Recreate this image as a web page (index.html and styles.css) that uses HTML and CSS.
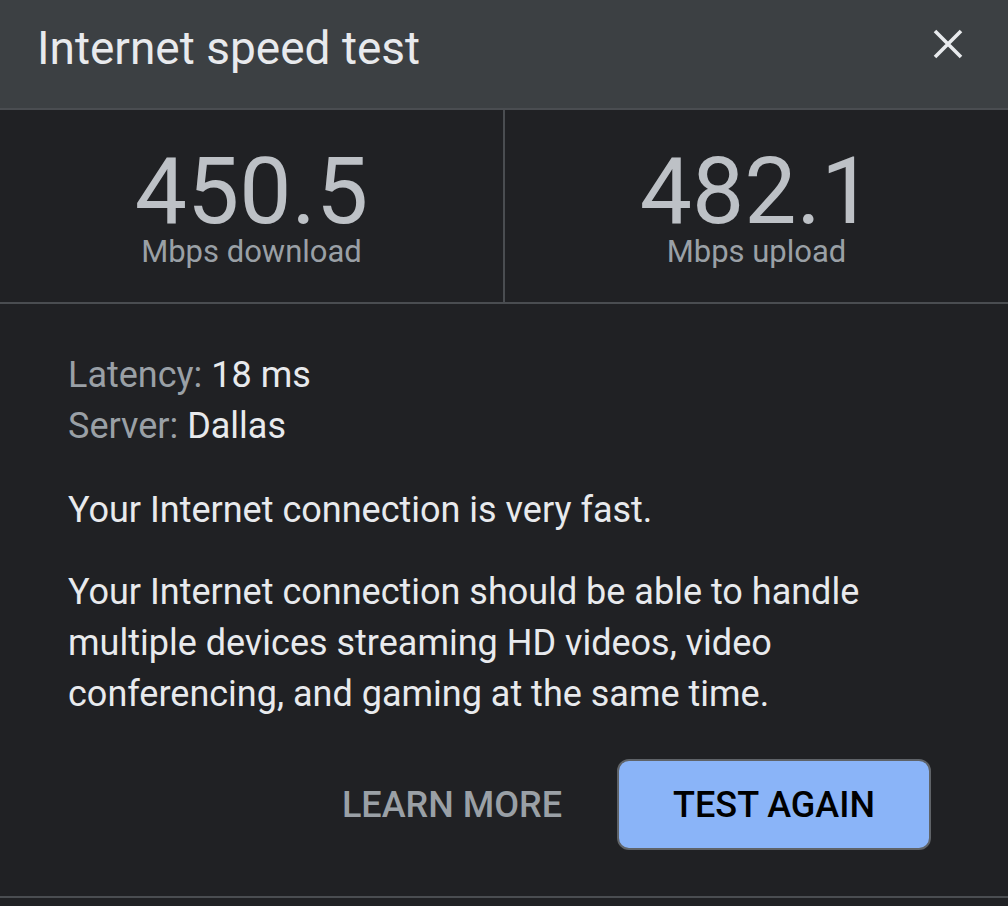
FILE: index.html
```html
<!DOCTYPE html>
<html>
<head>
<meta charset="utf-8">
<link rel="stylesheet" href="styles.css">
</head>
<body>
<div class="dialog">
  <header class="header">
    <h1 class="title">Internet speed test</h1>
    <button class="close" aria-label="Close">
      <svg width="32" height="32" viewBox="0 0 32 32"><path d="M3 3 L29 29 M29 3 L3 29" stroke="#e8eaed" stroke-width="3.6" stroke-linecap="butt" fill="none"/></svg>
    </button>
  </header>
  <section class="stats">
    <div class="stat">
      <div class="value">450.5</div>
      <div class="unit">Mbps download</div>
    </div>
    <div class="stat">
      <div class="value">482.1</div>
      <div class="unit">Mbps upload</div>
    </div>
  </section>
  <section class="body">
    <div class="meta">
      <div><span class="label">Latency:</span> 18 ms</div>
      <div><span class="label">Server:</span> Dallas</div>
    </div>
    <p class="verdict">Your Internet connection is very fast.</p>
    <p class="desc">Your Internet connection should be able to handle multiple devices streaming HD videos, video conferencing, and gaming at the same time.</p>
    <div class="actions">
      <button class="btn text">LEARN MORE</button>
      <button class="btn primary">TEST AGAIN</button>
    </div>
  </section>
  <div class="footer-line"></div>
</div>
</body>
</html>
```
FILE: styles.css
```css
* { box-sizing: border-box; }
html, body { margin: 0; padding: 0; }
body {
  background: #202124;
  font-family: Roboto, "Liberation Sans", sans-serif;
  color: #e8eaed;
  width: 1008px;
  height: 906px;
  overflow: hidden;
}
.dialog { display: flex; flex-direction: column; height: 906px; }
.header {
  background: #3c4043;
  height: 110px;
  border-bottom: 2px solid #4a4d51;
  display: flex;
  align-items: center;
  justify-content: space-between;
  padding: 0 44px 0 37px;
}
.title {
  margin: 0;
  font-size: 46px;
  font-weight: 400;
  color: #e8eaed;
  padding-bottom: 12px;
}
.close {
  background: none;
  border: 0;
  padding: 0;
  width: 32px;
  height: 32px;
  margin-bottom: 20px;
  display: flex;
}
.stats {
  display: flex;
  height: 194px;
  border-bottom: 2px solid #4a4d51;
}
.stat {
  flex: 1;
  display: flex;
  flex-direction: column;
  align-items: center;
  padding-top: 37px;
}
.stat + .stat { border-left: 2px solid #4a4d51; }
.value {
  font-size: 93px;
  line-height: 89px;
  color: #bdc1c6;
}
.unit {
  font-size: 31px;
  line-height: 32px;
  color: #9aa0a6;
}
.body {
  padding: 46px 68px 0 68px;
  flex: 1;
  border-bottom: 2px solid #4a4d51;
}
.meta { font-size: 36px; line-height: 51px; color: #e8eaed; }
.label { color: #9aa0a6; }
.verdict, .desc {
  margin: 0;
  font-size: 36px;
  line-height: 51px;
  color: #e8eaed;
}
.verdict { margin-top: 33px; }
.desc { margin-top: 31px; }
.actions {
  display: flex;
  justify-content: flex-end;
  align-items: center;
  gap: 55px;
  margin-top: 39px;
  padding-right: 9px;
}
.btn {
  font-family: Roboto, "Liberation Sans", sans-serif;
  font-size: 36px;
  font-weight: 500;
  border: 0;
  background: none;
  padding: 0;
}
.btn.text { color: #9aa0a6; }
.btn.primary {
  background: #8ab4f8;
  color: #000;
  width: 314px;
  height: 91px;
  border-radius: 12px;
  border: 2px solid #5f6368;
}
.footer-line { height: 8px; background: #202124; }
```
